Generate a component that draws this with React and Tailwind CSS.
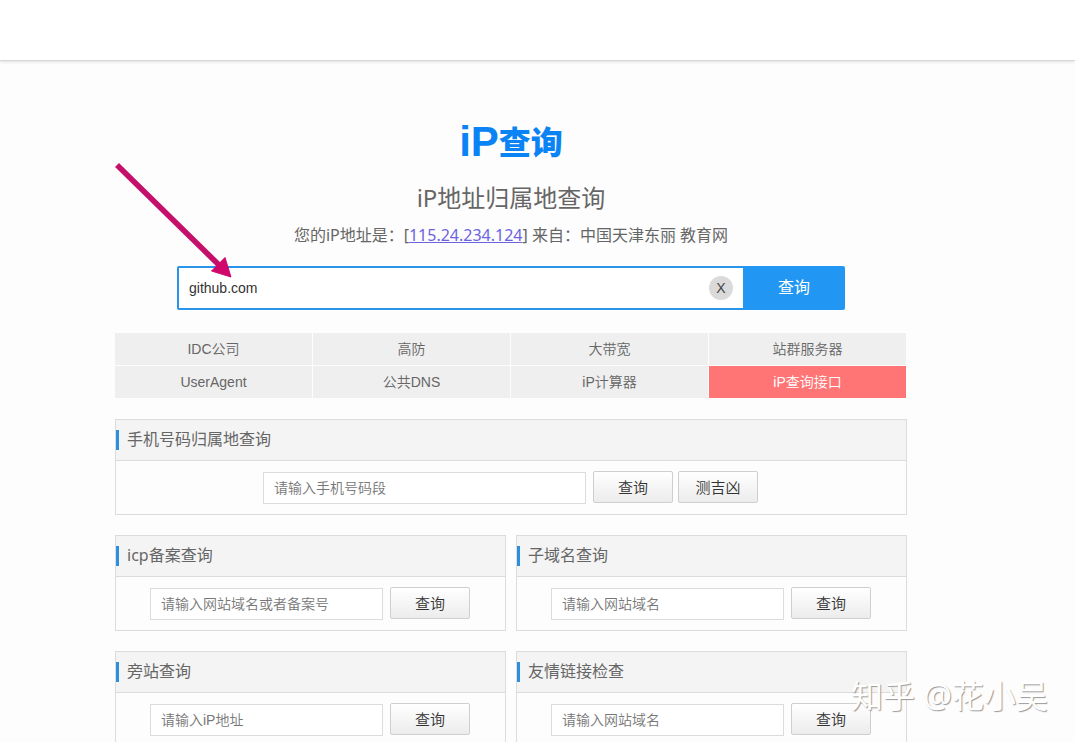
import React from "react";

const navItems = [
  "IDC公司",
  "高防",
  "大带宽",
  "站群服务器",
  "UserAgent",
  "公共DNS",
  "iP计算器",
  "iP查询接口",
];

const tools = [
  { id: "icp", title: "icp备案查询", placeholder: "请输入网站域名或者备案号" },
  { id: "subdomain", title: "子域名查询", placeholder: "请输入网站域名" },
  { id: "neighbour", title: "旁站查询", placeholder: "请输入iP地址" },
  { id: "links", title: "友情链接检查", placeholder: "请输入网站域名" },
];

function SmallButton({ children }) {
  return (
    <button
      type="button"
      className="mb-px h-8 w-20 shrink-0 rounded-xs border border-[#cfcfcf] bg-linear-to-b from-white to-[#ececec] text-[15px] leading-none font-[350] text-[#333]"
    >
      {children}
    </button>
  );
}

function Card({ id, title, children }) {
  return (
    <section className="border border-[#dcdcdc]">
      <h2 className="flex h-[41px] items-center border-b border-[#dcdcdc] bg-[#f4f4f4]">
        <span className="h-5 w-[3px] bg-[#2f8fdf]" />
        <label
          htmlFor={id}
          className="pb-0.5 pl-2 font-['Noto_Sans','Noto_Sans_CJK_SC',sans-serif] text-base leading-5 font-normal text-[#666]"
        >
          {title}
        </label>
      </h2>
      <form className="flex h-[53px] items-center justify-center gap-[7px] pr-px">{children}</form>
    </section>
  );
}

function Field({ id, placeholder, wide }) {
  return (
    <input
      id={id}
      type="text"
      placeholder={placeholder}
      className={
        (wide ? "w-[323px]" : "w-[233px]") +
        " h-8 min-w-0 border border-[#dcdcdc] bg-white px-2.5 text-sm font-[350] text-[#333] outline-none placeholder:text-[#777]"
      }
    />
  );
}

export default function App() {
  return (
    <div className="relative h-screen overflow-hidden bg-[#fdfdfd] font-['Liberation_Sans','Noto_Sans_CJK_SC',sans-serif] text-[#666]">
      <header className="h-[61px] border-b border-[#d5d8d8] bg-white shadow-[0_1px_3px_rgba(0,0,0,0.12)]" />

      <main className="pr-[53px]">
        <div className="mx-auto max-w-[792px] pt-[61px]">
          <div className="flex h-10 items-center justify-center text-[#0a84f5]">
            <span className="text-[42px] leading-none font-bold">iP</span>
            <span className="pb-1 font-['Noto_Sans_CJK_SC',sans-serif] text-[32px] leading-none font-black">
              查询
            </span>
          </div>

          <h1 className="mt-5 text-center font-['Noto_Sans','Noto_Sans_CJK_SC',sans-serif] text-2xl leading-8 font-normal text-[#666]">
            iP地址归属地查询
          </h1>
          <p className="mt-[5px] text-center font-['Noto_Sans','Noto_Sans_CJK_SC',sans-serif] text-base leading-8 font-normal text-[#666]">
            您的iP地址是：[
            <a href="#ip" className="text-[#6b63e0] underline">
              115.24.234.124
            </a>
            ] 来自：中国天津东丽 教育网
          </p>

          <form className="mx-auto mt-[15px] flex h-11 max-w-[668px] overflow-hidden rounded-xs">
            <div className="flex flex-1 items-center rounded-l-xs border-2 border-r-0 border-[#2a94ea] bg-white pr-2.5">
              <input
                type="text"
                aria-label="iP地址或域名"
                defaultValue="github.com"
                className="h-full min-w-0 flex-1 bg-transparent px-2.5 text-sm text-[#333] outline-none"
              />
              <button
                type="button"
                className="size-6 rounded-full bg-[#dadada] text-sm leading-none text-[#444]"
              >
                X
              </button>
            </div>
            <button type="button" className="w-[102px] bg-[#2196f3] text-base text-white">
              查询
            </button>
          </form>

          <nav className="mt-[23px] mr-px grid grid-cols-4 gap-px">
            {navItems.map((item, i) => (
              <a
                key={item}
                href="#nav"
                className={
                  "flex h-8 items-center justify-center text-sm font-[350] " +
                  (i === navItems.length - 1 ? "bg-[#ff7575] text-white" : "bg-[#efefef] text-[#666]")
                }
              >
                {item}
              </a>
            ))}
          </nav>

          <div className="mt-[21px]">
            <Card id="phone" title="手机号码归属地查询">
              <Field id="phone" placeholder="请输入手机号码段" wide />
              <div className="flex gap-[5px]">
                <SmallButton>查询</SmallButton>
                <SmallButton>测吉凶</SmallButton>
              </div>
            </Card>
          </div>

          <div className="mt-5 grid grid-cols-2 gap-x-2.5 gap-y-5">
            {tools.map((tool) => (
              <Card key={tool.id} id={tool.id} title={tool.title}>
                <Field id={tool.id} placeholder={tool.placeholder} />
                <SmallButton>查询</SmallButton>
              </Card>
            ))}
          </div>
        </div>
      </main>

      <svg
        className="pointer-events-none absolute top-[160px] left-[112px]"
        width="124"
        height="120"
        viewBox="0 0 124 120"
        aria-hidden="true"
      >
        <path d="M5 5 L107 105" stroke="#c4106a" strokeWidth="5.6" fill="none" />
        <path d="M119 117 L99.500 111 L113 97.500 Z" fill="#d0086c" stroke="#d0086c" />
      </svg>

      <div className="pointer-events-none absolute right-[27px] bottom-[26px] font-['Noto_Sans','Noto_Sans_CJK_SC',sans-serif] text-[32px] leading-10 font-normal text-white [text-shadow:1px_1px_1px_#999]">
        知乎 @花小吴
      </div>
    </div>
  );
}
